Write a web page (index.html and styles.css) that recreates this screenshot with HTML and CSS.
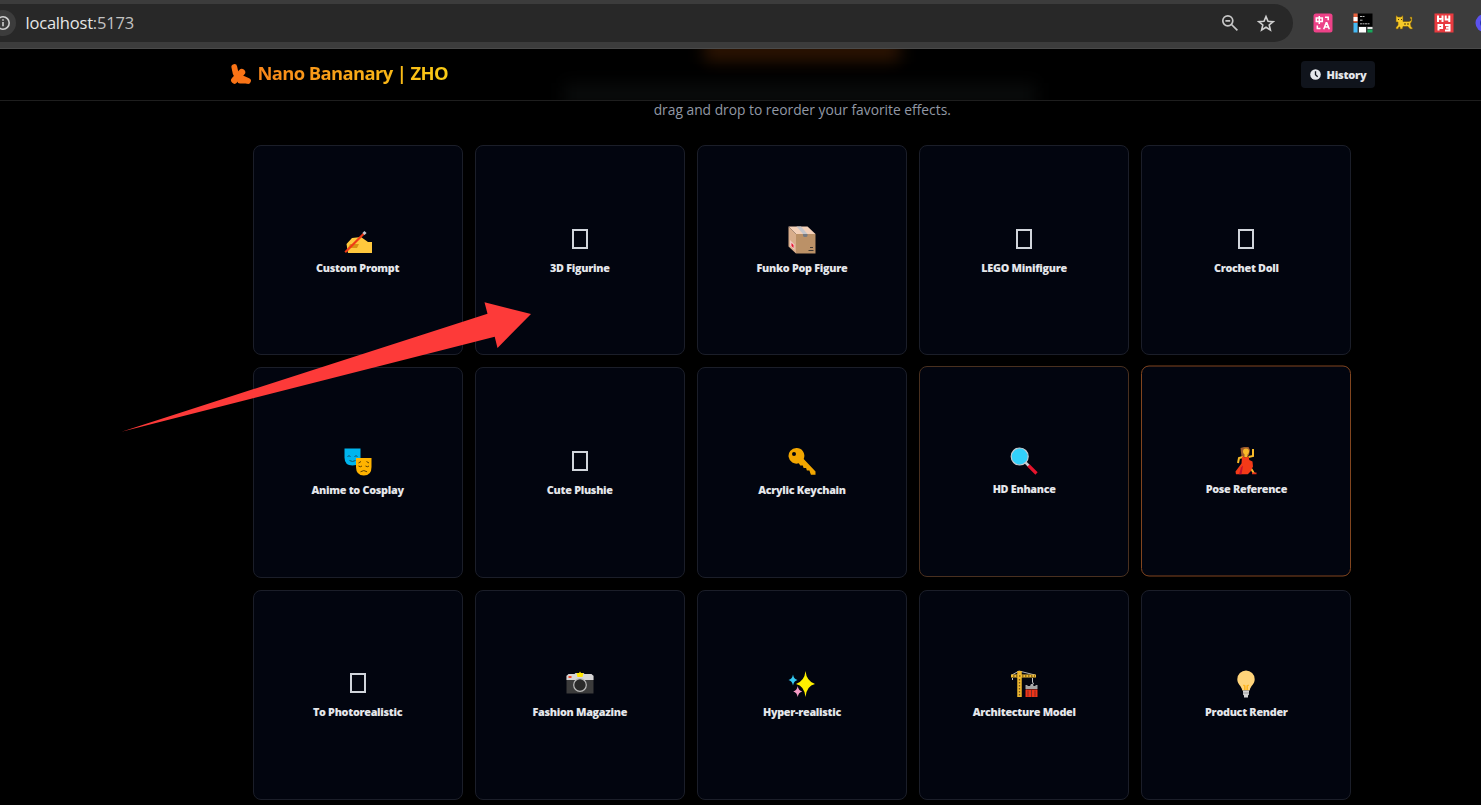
FILE: index.html
```html
<!DOCTYPE html>
<html lang="en">
<head>
<meta charset="utf-8">
<title>Nano Bananary | ZHO</title>
<link rel="stylesheet" href="styles.css">
</head>
<body>
<div class="toolbar">
  <div class="omnibox">
    <span class="info"><svg width="26" height="26" viewBox="0 0 26 26"><circle cx="13" cy="13" r="13" fill="#3c3c3c"/><circle cx="13" cy="13" r="6.2" fill="none" stroke="#d0d0d0" stroke-width="1.6"/><path d="M13 12v4.3M13 9.2v1.6" stroke="#d0d0d0" stroke-width="1.6"/></svg></span>
    <span class="url">localhost<span class="port">:5173</span></span>
    <svg class="zoomout" width="18" height="18" viewBox="0 0 18 18" fill="none" stroke="#c7c7c7" stroke-width="1.7"><circle cx="6.8" cy="6.8" r="5"/><path d="M10.5 10.5L16.4 16.4M4.4 6.8h4.8"/></svg>
    <svg class="star" width="18" height="18" viewBox="0 0 18 18" fill="none" stroke="#d0d0d0" stroke-width="1.6"><path d="M9 2.6l2 4.7 5.1.4-3.9 3.3 1.2 5L9 13.3 4.6 16l1.2-5-3.9-3.3 5.1-.4z"/></svg>
  </div>
  <div class="extensions">
    <svg width="20" height="20" viewBox="0 0 20 20"><rect x=".5" y=".5" width="19" height="19" rx="2.5" fill="#ed4288"/><g fill="none" stroke="#fff" stroke-width="1.5"><path d="M3.3 5h6v3.4h-6zM6.3 3v8M12 4.2h3.2v3M4.3 12.6v3h3.2M10.7 16.2l2.500-6.400h.6l2.500 6.400M11.8 13.900h3.500"/></g></svg>
    <svg width="20" height="20" viewBox="0 0 20 20"><path fill="#e8603c" d="M.5.5h4v9h-4z"/><path fill="#fff" d="M.5 4h4v4h-4zM6 14h7v5.500H6z"/><path fill="#45b9f4" d="M.5 10h4v9.500h-4z"/><path d="M5 .5h14.500v13H5z"/><path fill="#e5e5e5" d="M14.500 14h5v2h-5z"/><path fill="#17a85b" d="M14.500 16.500h5v3h-5z"/><g stroke="#bbb"><path d="M7 3.500h5M7 7.200h3M7 10.800h10" stroke-dasharray="2 .5"/></g></svg>
    <svg width="20" height="20" viewBox="0 0 20 20"><path fill="#f6c928" stroke="#71500c" stroke-width=".6" d="M2 2.500l2 1.500h3l2-1.500V8.500h6l2-1V6l-1-.5V4h2v4l-1.500 2.500.5 3 1.500 1.500v1H16l-2-2.500H9L8.500 16H6v-2H5l-1 2H2v-1.500l2-2.500V9H2z"/><path stroke="#4f390c" d="M4 6.500h1M7 6.500h1M11 10v2M14 10v2"/></svg>
    <svg width="20" height="20" viewBox="0 0 20 20"><rect x=".5" y=".5" width="19" height="19" fill="#e83a3f"/><g fill="none" stroke="#fff" stroke-width="2"><path d="M4 2.500v6.500M8.500 2.500v6.500M4 4.500l2.200 1.500 2.300-1.500M11.700 2.500v4h4.600M15.300 2.500V9M4.500 17.500V12h3.600v3H4.500M11 12h4.500v5.500H11M12 14.700h3.500"/></g></svg>
    <svg width="20" height="20" viewBox="0 0 20 20"><circle cx="10.500" cy="10" r="9" fill="#5b52ee"/><circle cx="11" cy="10" r="5" fill="#2632ad"/></svg>
  </div>
</div>

<header class="header">
  <div class="glow glow-title"></div>
  <div class="glow glow-text"></div>
  <div class="header-inner">
    <div class="brand">
      <svg width="22" height="22" viewBox="0 0 22 22" fill="none" stroke="#f97316" stroke-linecap="round"><path d="M4.300 4l1.400 6.500" stroke-width="5.800"/><path d="M11.800 9.300L4.500 17.300" stroke-width="6.800"/><path d="M9 14l9 3.900" stroke-width="5.800"/><path d="M10 18h7" stroke-width="5"/></svg>
      <h1>Nano Bananary | ZHO</h1>
    </div>
    <button class="history"><svg width="11" height="11" viewBox="0 0 10 10"><circle cx="5" cy="5" r="4.800" fill="#e5e7eb"/><path d="M5 2v3.200l2 1.800" fill="none" stroke="#10141c" stroke-width="1.200"/></svg><span>History</span></button>
  </div>
</header>

<main class="main">
  <p class="intro">drag and drop to reorder your favorite effects.</p>
  <div class="grid">
    <div class="card"><svg class="icon" viewBox="0 0 28 28"><path fill="#ffc83d" d="M4 27L2.500 18l5.500-6 9-1 7 5h4v11z"/><path fill="#d99212" d="M6 18h9l-2 4H4z"/><path d="M1.200 26.300L20 7.500" stroke="#f03a17" stroke-width="2.200"/><path d="M19.500 8l2-2" stroke="#c8c8d0" stroke-width="3"/></svg><span class="label">Custom Prompt</span></div>
    <div class="card"><span class="icon"><i class="tofu"></i></span><span class="label">3D Figurine</span></div>
    <div class="card"><svg class="icon" viewBox="0 0 28 28"><path fill="#f3d0b8" d="M.5.500h19L27.500 8H8z"/><path fill="#d8ad8b" d="M.5.500L8 8v19.500l-7.500-7z"/><path fill="#bb9167" d="M8 8h19.500v19.500H8z"/><path fill="#c5c5ca" d="M8.500.500h4.500L19.500 8H15z"/><path fill="#777a80" d="M15 8h4.500v2l-1 1h-2.500l-1-1z"/><path fill="#f0c9c3" d="M2 14l4.500 4.500V24L2 19.500z"/><path fill="#e81030" d="M3.500 17l2 2v3l-2-2z"/><path d="M22 21.500h3M20.500 24.500H25.500" stroke="#433b35"/></svg><span class="label">Funko Pop Figure</span></div>
    <div class="card"><span class="icon"><i class="tofu"></i></span><span class="label">LEGO Minifigure</span></div>
    <div class="card"><span class="icon"><i class="tofu"></i></span><span class="label">Crochet Doll</span></div>

    <div class="card"><svg class="icon" viewBox="0 0 28 28"><path fill="#00b5ed" d="M.500 .500h16v9q0 8-8 8t-8-8z"/><path fill="none" stroke="#14516c" d="M3.500 8.500q1.500-1.500 3 0M10.500 8.500q1.500-1.500 3 0M5.500 12.500q3 2 6 0"/><path fill="#ffb300" d="M12 10h15.500v9q0 8.500-7.700 8.500T12 19z"/><path fill="none" stroke="#604000" d="M14.500 18q2 1.500 3.500 0M21.500 18q2 1.500 3.500 0M16.500 23.800q3.300-2.500 6.600 0M14.500 15l2.500-1.500M25 15l-2.500-1.500"/></svg><span class="label">Anime to Cosplay</span></div>
    <div class="card"><span class="icon"><i class="tofu"></i></span><span class="label">Cute Plushie</span></div>
    <div class="card"><svg class="icon" viewBox="0 0 28 28"><path fill="#f2a600" fill-rule="evenodd" d="M8.300 0a7.800 7.800 0 1 0 2.500 15.200l1.500 2.300h2.500l.8 2.500h2.500l.8 2.500h2.500l1.500 4.200H27.500V23.500L15.700 11A7.800 7.800 0 0 0 8.300 0zM6 4a2 2 0 1 1 0 4 2 2 0 0 1 0-4z"/></svg><span class="label">Acrylic Keychain</span></div>
    <div class="card warm"><svg class="icon" viewBox="0 0 28 28"><path d="M15 15l4 4" stroke="#c9cdd2" stroke-width="2.500"/><path d="M18.500 18.500l8 8" stroke="#e5142c" stroke-width="3.200"/><circle cx="9.700" cy="9.500" r="8.500" fill="#32d0fa" stroke="#c5cbd0" stroke-width="1.200"/></svg><span class="label">HD Enhance</span></div>
    <div class="card hot"><svg class="icon" viewBox="0 0 28 28"><path fill="#9e5b2c" d="M8.500 1.500L12 .500h4.500l1.500 3-1 5-3 2H9.500z"/><circle cx="14" cy="5" r="3" fill="#f8b928"/><path fill="#f8b928" d="M12.500 7h3v4h-3z"/><path fill="none" stroke="#f9bb29" stroke-width="2" d="M11 10.500L7 11.500l-1 5M16.500 10.500l4.500-1V2.500M18.500 21l3.500 6"/><path fill="#f33a18" d="M10 10l3.500 1 3-1 .8 3.500 3.200 1.500.5 5-2.500 5-3 3H4L3.500 25l6-8z"/><path fill="#c2112c" d="M9 21l2-2-1.500 9H7z"/><path stroke="#e9331a" stroke-width="1.800" d="M20 27h4.500"/></svg><span class="label">Pose Reference</span></div>

    <div class="card"><span class="icon"><i class="tofu"></i></span><span class="label">To Photorealistic</span></div>
    <div class="card"><svg class="icon" viewBox="0 0 28 28"><path fill="#3b3b3b" d="M.500 5h27v18.500H.500z"/><path fill="#d5d5d5" d="M.500 10V6l2-2h6l1-1h8l1 1h7l2 2v4z"/><path fill="#f04b2c" d="M2.500 6h3v2h-3z"/><circle cx="14" cy="15" r="6.300" fill="#292929" stroke="#bbb" stroke-width="1.200"/><path fill="#ffe600" d="M14 1.500l1 1.500 2.500 0-.5 2-.5 2h-5l-.5-2-.5-2 2.500 0z"/></svg><span class="label">Fashion Magazine</span></div>
    <div class="card"><svg class="icon" viewBox="0 0 28 28"><path fill="#fff000" d="M17.500 1q1 10 9.500 13-8.500 2-9.500 13-1-11-9.500-13 8.500-3 9.500-13z"/><path fill="#35c9f3" d="M5 4.500q.8 4.700 4.500 5.500-3.700.800-4.500 5.500Q4.200 10.800.500 10 4.200 9.200 5 4.500z"/><path fill="#f49bc5" d="M9.700 16q.8 4.700 4.500 5.500-3.700.800-4.500 5.500-.8-4.700-4.500-5.500 3.700-.8 4.500-5.500z"/></svg><span class="label">Hyper-realistic</span></div>
    <div class="card"><svg class="icon" viewBox="0 0 28 28"><path d="M1 5.500L9 1l16 4" fill="none" stroke="#b5b5b5"/><path d="M9.500 1v26" stroke="#eeb72e" stroke-width="4.500"/><path d="M1 6H26" stroke="#f1bd32" stroke-width="3"/><path d="M9.500 9v18M3 6h22" stroke="#79571b" stroke-width="1.300" stroke-dasharray="1.500 1.500"/><path d="M2.500 8v2M22.500 8v4l1 2-3 1M16 19l6-4 5 4" fill="none" stroke="#c6c6c6"/><path fill="#a5a5a5" d="M15.500 15h2v1h8v-1h2v4h-12z"/><path fill="#ee3518" d="M15.500 19.500h12V27h-12z"/><path d="M18 20.500v6M21.500 20v7M25 20.500v6" stroke="#822b25"/></svg><span class="label">Architecture Model</span></div>
    <div class="card"><svg class="icon" viewBox="0 0 28 28"><path fill="#ffd47a" d="M14 .500a8.700 8.700 0 0 0-8.700 8.700c0 5 4.200 6.300 5 11.300h7.400c.8-5 5-6.300 5-11.300A8.700 8.700 0 0 0 14 .500z"/><path fill="none" stroke="#ffb41e" stroke-width="1.500" d="M12.800 20v-4l-1.500-1M15.200 20v-4l1.500-1"/><path fill="#d5d5d5" d="M11 20.500h6v4l-1 1v2h-4v-2l-1-1z"/><path d="M11 23h6" stroke="#999"/></svg><span class="label">Product Render</span></div>
  </div>
</main>

<svg class="arrow" width="420" height="150" viewBox="0 0 420 150"><path fill="#fd3a39" d="M1.500 141.700L367.500 23.700 364.500 12.300 411 24 377.500 58 374.700 46.700z"/></svg>
</body>
</html>
```
FILE: styles.css
```css
* { box-sizing: border-box; }

body {
  margin: 0;
  height: 805px;
  overflow: hidden;
  position: relative;
  background: #000;
  color: #e5e7eb;
  font-family: "Open Sans", "Noto Sans", sans-serif;
}

.toolbar {
  height: 49px;
  padding-top: 4px;
  display: flex;
  overflow: hidden;
  background: #3c3c3c;
  border-bottom: 1px solid #4a4a4a;
}
.omnibox {
  flex: none;
  width: 1293px;
  height: 38px;
  padding-right: 18px;
  display: flex;
  align-items: center;
  background: #282828;
  border-radius: 0 19px 19px 0;
}
.info { width: 26px; height: 26px; margin-left: -10px; }
.url { margin: -1px auto 0 9.500px; font-size: 16.5px; color: #e6e6e6; letter-spacing: -0.2px; }
.port { color: #c2c2c2; }
.zoomout { margin-right: 18px; }

.extensions { display: flex; gap: 20.3px; padding: 9px 0 0 20px; }
.extensions svg { flex: none; }

.header {
  position: relative;
  height: 52px;
  overflow: hidden;
  border-bottom: 1px solid #1e1e1e;
}
.glow { position: absolute; filter: blur(8px); }
.glow-title { left: 704px; top: -14px; width: 196px; height: 27px; background: #2b1302; }
.glow-text { left: 564px; top: 34px; width: 472px; height: 24px; background: #090b0b; }
.header-inner {
  position: relative;
  height: 51px;
  padding: 0 106px 0 230px;
  display: flex;
  align-items: center;
  justify-content: space-between;
}
.brand { display: flex; align-items: center; gap: 5.500px; margin-top: -2px; }
h1 {
  margin: -1px 0 0;
  font-size: 18.4px;
  line-height: 26px;
  font-weight: 700;
  letter-spacing: -0.6px;
  background: linear-gradient(to right, #f9861a, #facc15);
  -webkit-background-clip: text;
  background-clip: text;
  color: transparent;
}
.history {
  width: 74px;
  height: 27px;
  padding: 0 0 1px;
  display: flex;
  align-items: center;
  justify-content: center;
  gap: 6px;
  border: 0;
  border-radius: 4px;
  background: #10141c;
  color: #e5e7eb;
  font: 800 11px "Open Sans", sans-serif;
  letter-spacing: -0.25px;
}

.main { padding: 0 129px 0 252.500px; }
.intro {
  margin: -1px 0 0;
  height: 45px;
  line-height: 20px;
  font-size: 13.8px;
  text-align: center;
  color: #9298a5;
}
.grid {
  display: grid;
  grid-template-columns: repeat(5, 210.2px);
  grid-auto-rows: 210.3px;
  gap: 12px;
}
.card {
  display: flex;
  flex-direction: column;
  align-items: center;
  justify-content: center;
  gap: 7px;
  border: 1px solid #1b1e29;
  border-radius: 8px;
  background: #02050f;
}
.card.warm { transform: translateY(-1px); border-color: #49301f; }
.card.hot { transform: translateY(-1.5px); border-color: #81451f; }
.icon { width: 28px; height: 28px; display: flex; justify-content: center; }
.tofu { width: 16px; height: 20px; margin-top: 3px; border: 2px solid #d1d5db; }
.label {
  font-size: 10.8px;
  line-height: 14px;
  font-weight: 800;
  letter-spacing: -0.28px;
  white-space: nowrap;
}

.arrow { position: absolute; left: 120px; top: 290px; }
```
